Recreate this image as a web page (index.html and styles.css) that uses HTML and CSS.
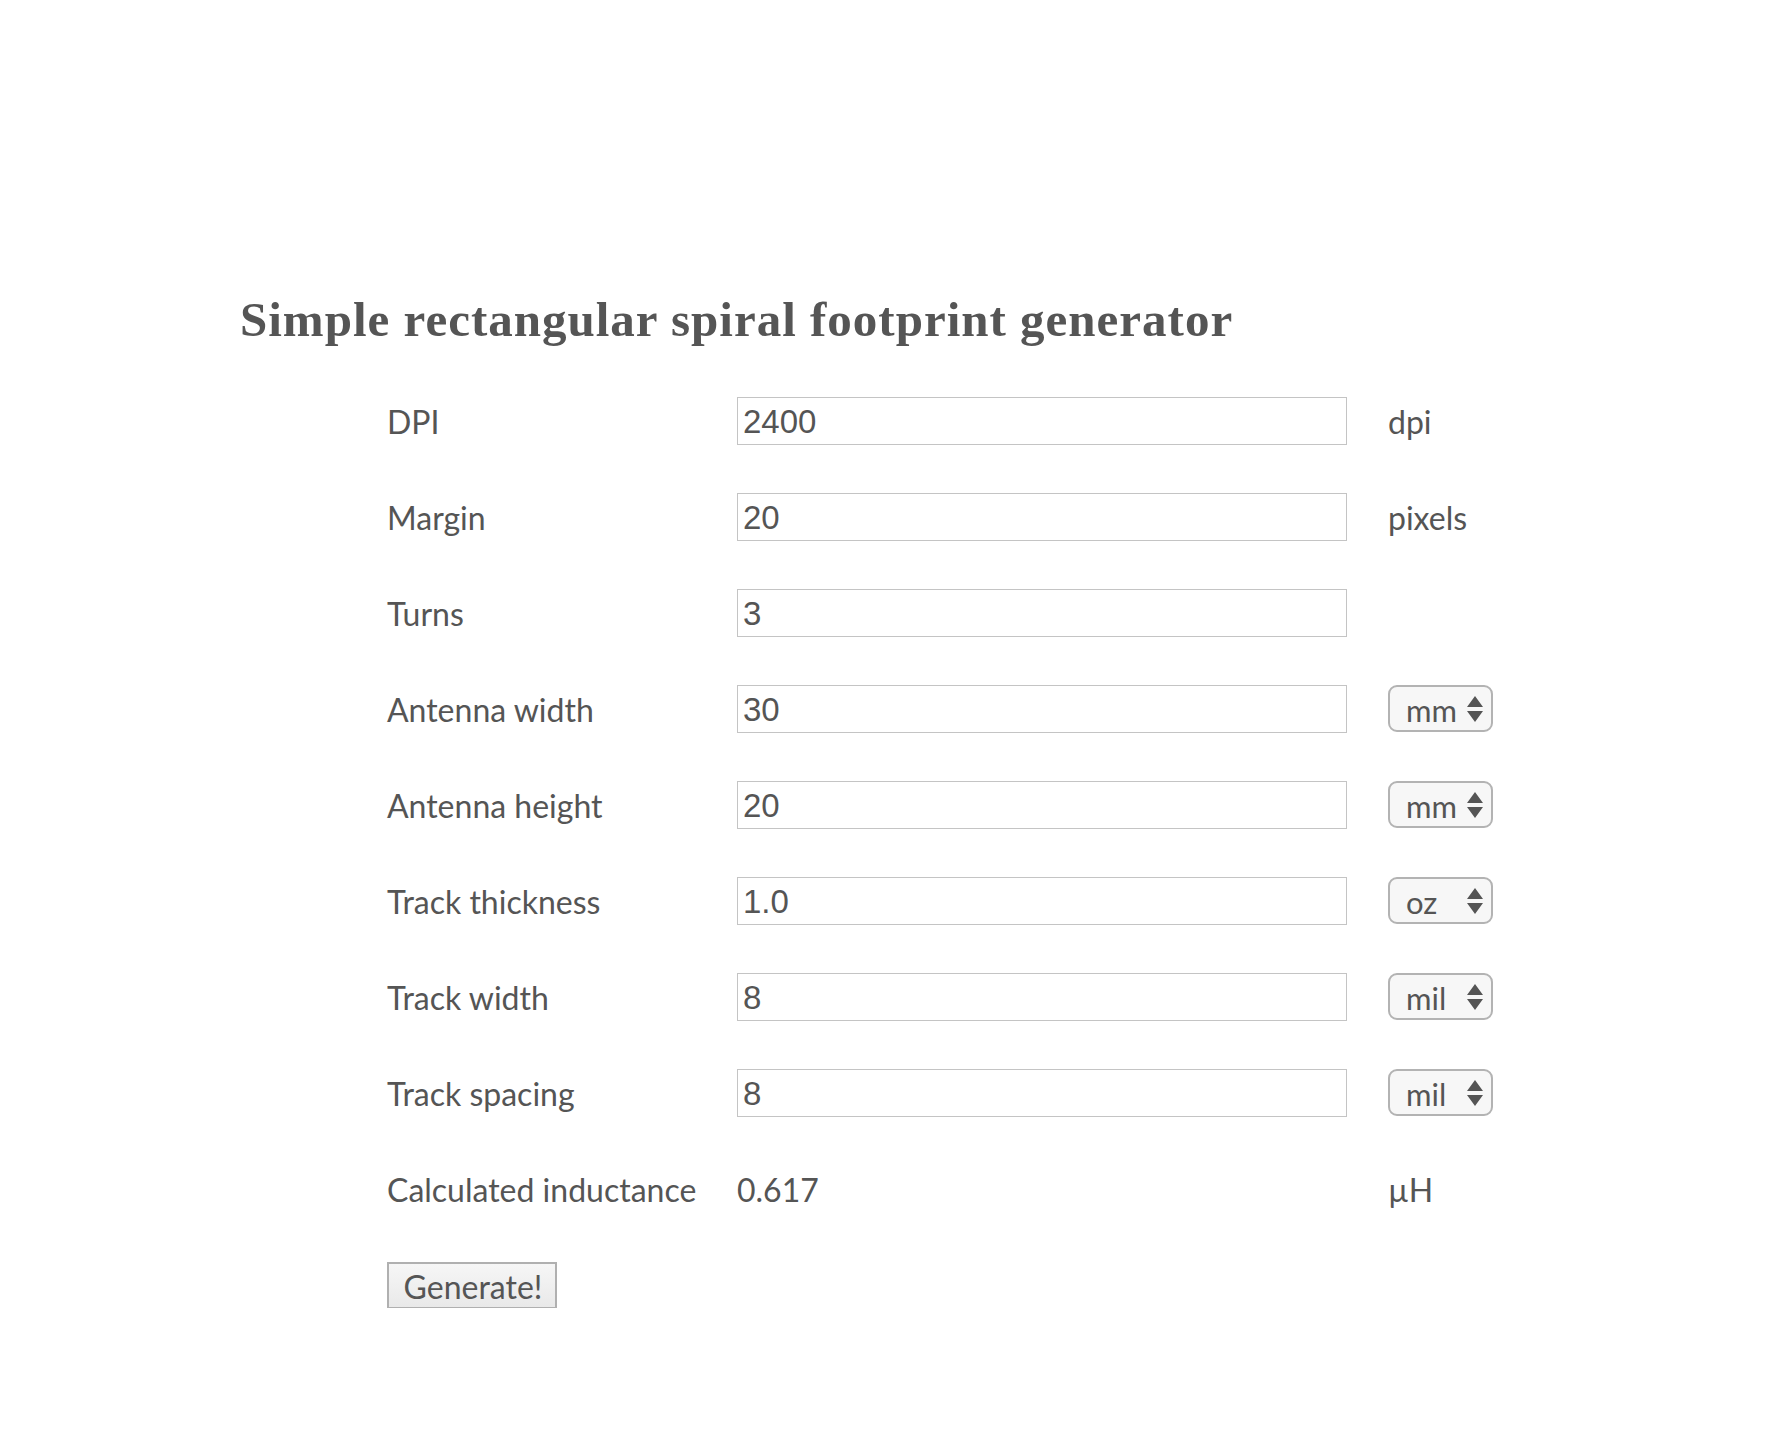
FILE: index.html
```html
<!DOCTYPE html>
<html lang="en">
<head>
<meta charset="utf-8">
<title>Simple rectangular spiral footprint generator</title>
<link rel="stylesheet" href="styles.css">
</head>
<body>
<main class="page">
  <h1 class="title">Simple rectangular spiral footprint generator</h1>
  <form class="form">
    <label class="label">DPI</label>
    <input class="field" type="text" value="2400">
    <span class="unit">dpi</span>

    <label class="label">Margin</label>
    <input class="field" type="text" value="20">
    <span class="unit">pixels</span>

    <label class="label">Turns</label>
    <input class="field" type="text" value="3">
    <span class="unit"></span>

    <label class="label">Antenna width</label>
    <input class="field" type="text" value="30">
    <span class="sel"><select><option>mm</option></select><svg class="arrows" width="18" height="28" viewBox="0 0 18 28"><path d="M9 1 L17 12 L1 12 Z M9 27 L17 16 L1 16 Z" fill="#555"/></svg></span>

    <label class="label">Antenna height</label>
    <input class="field" type="text" value="20">
    <span class="sel"><select><option>mm</option></select><svg class="arrows" width="18" height="28" viewBox="0 0 18 28"><path d="M9 1 L17 12 L1 12 Z M9 27 L17 16 L1 16 Z" fill="#555"/></svg></span>

    <label class="label">Track thickness</label>
    <input class="field" type="text" value="1.0">
    <span class="sel"><select><option>oz</option></select><svg class="arrows" width="18" height="28" viewBox="0 0 18 28"><path d="M9 1 L17 12 L1 12 Z M9 27 L17 16 L1 16 Z" fill="#555"/></svg></span>

    <label class="label">Track width</label>
    <input class="field" type="text" value="8">
    <span class="sel"><select><option>mil</option></select><svg class="arrows" width="18" height="28" viewBox="0 0 18 28"><path d="M9 1 L17 12 L1 12 Z M9 27 L17 16 L1 16 Z" fill="#555"/></svg></span>

    <label class="label">Track spacing</label>
    <input class="field" type="text" value="8">
    <span class="sel"><select><option>mil</option></select><svg class="arrows" width="18" height="28" viewBox="0 0 18 28"><path d="M9 1 L17 12 L1 12 Z M9 27 L17 16 L1 16 Z" fill="#555"/></svg></span>

    <span class="label">Calculated inductance</span>
    <span class="value">0.617</span>
    <span class="unit">µH</span>

    <div class="actions"><button class="btn" type="button">Generate!</button></div>
  </form>
</main>
</body>
</html>
```
FILE: styles.css
```css
html, body {
  margin: 0;
  padding: 0;
  background: #ffffff;
}
body {
  color: #555555;
  font-family: Lato, "Open Sans", sans-serif;
}
.page {
  padding: 290px 0 0 240px;
}
.title {
  margin: 0;
  font-family: "Liberation Serif", serif;
  font-weight: bold;
  font-size: 49px;
  letter-spacing: 1px;
  line-height: 60px;
  color: #555555;
}
.form {
  display: grid;
  grid-template-columns: 350px 651px auto;
  grid-auto-rows: 47px;
  row-gap: 49px;
  align-items: center;
  margin: 47px 0 0 147px;
}
.label, .unit, .value {
  font-size: 32px;
  line-height: 47px;
  padding-top: 2px;
}
.field {
  box-sizing: border-box;
  width: 610px;
  height: 48px;
  margin: 0;
  border: 1px solid #c4c4c4;
  padding: 3px 5px 0;
  font-family: "Liberation Sans", Arial, sans-serif;
  font-size: 33px;
  color: #555555;
  background: #fff;
  outline: none;
}
.sel {
  position: relative;
  display: inline-block;
  width: 105px;
  height: 47px;
}
.sel select {
  -webkit-appearance: none;
  appearance: none;
  box-sizing: border-box;
  width: 105px;
  height: 47px;
  margin: 0;
  border: 2px solid #b3b3b3;
  border-radius: 9px;
  background: #f7f7f7;
  padding: 2px 0 0 16px;
  font-family: Lato, sans-serif;
  font-size: 31px;
  color: #555555;
}
.arrows {
  position: absolute;
  right: 9px;
  top: 10px;
  pointer-events: none;
}
.actions {
  grid-column: 1 / span 3;
  height: 47px;
}
.btn {
  box-sizing: border-box;
  width: 170px;
  height: 47px;
  margin: 1px 0 0;
  padding: 2px 0 0 2px;
  border: 2px solid #b0b0b0;
  border-radius: 0;
  background: linear-gradient(#f6f6f6, #e9e9e9);
  font-family: Lato, sans-serif;
  font-size: 32px;
  color: #555555;
}
```
